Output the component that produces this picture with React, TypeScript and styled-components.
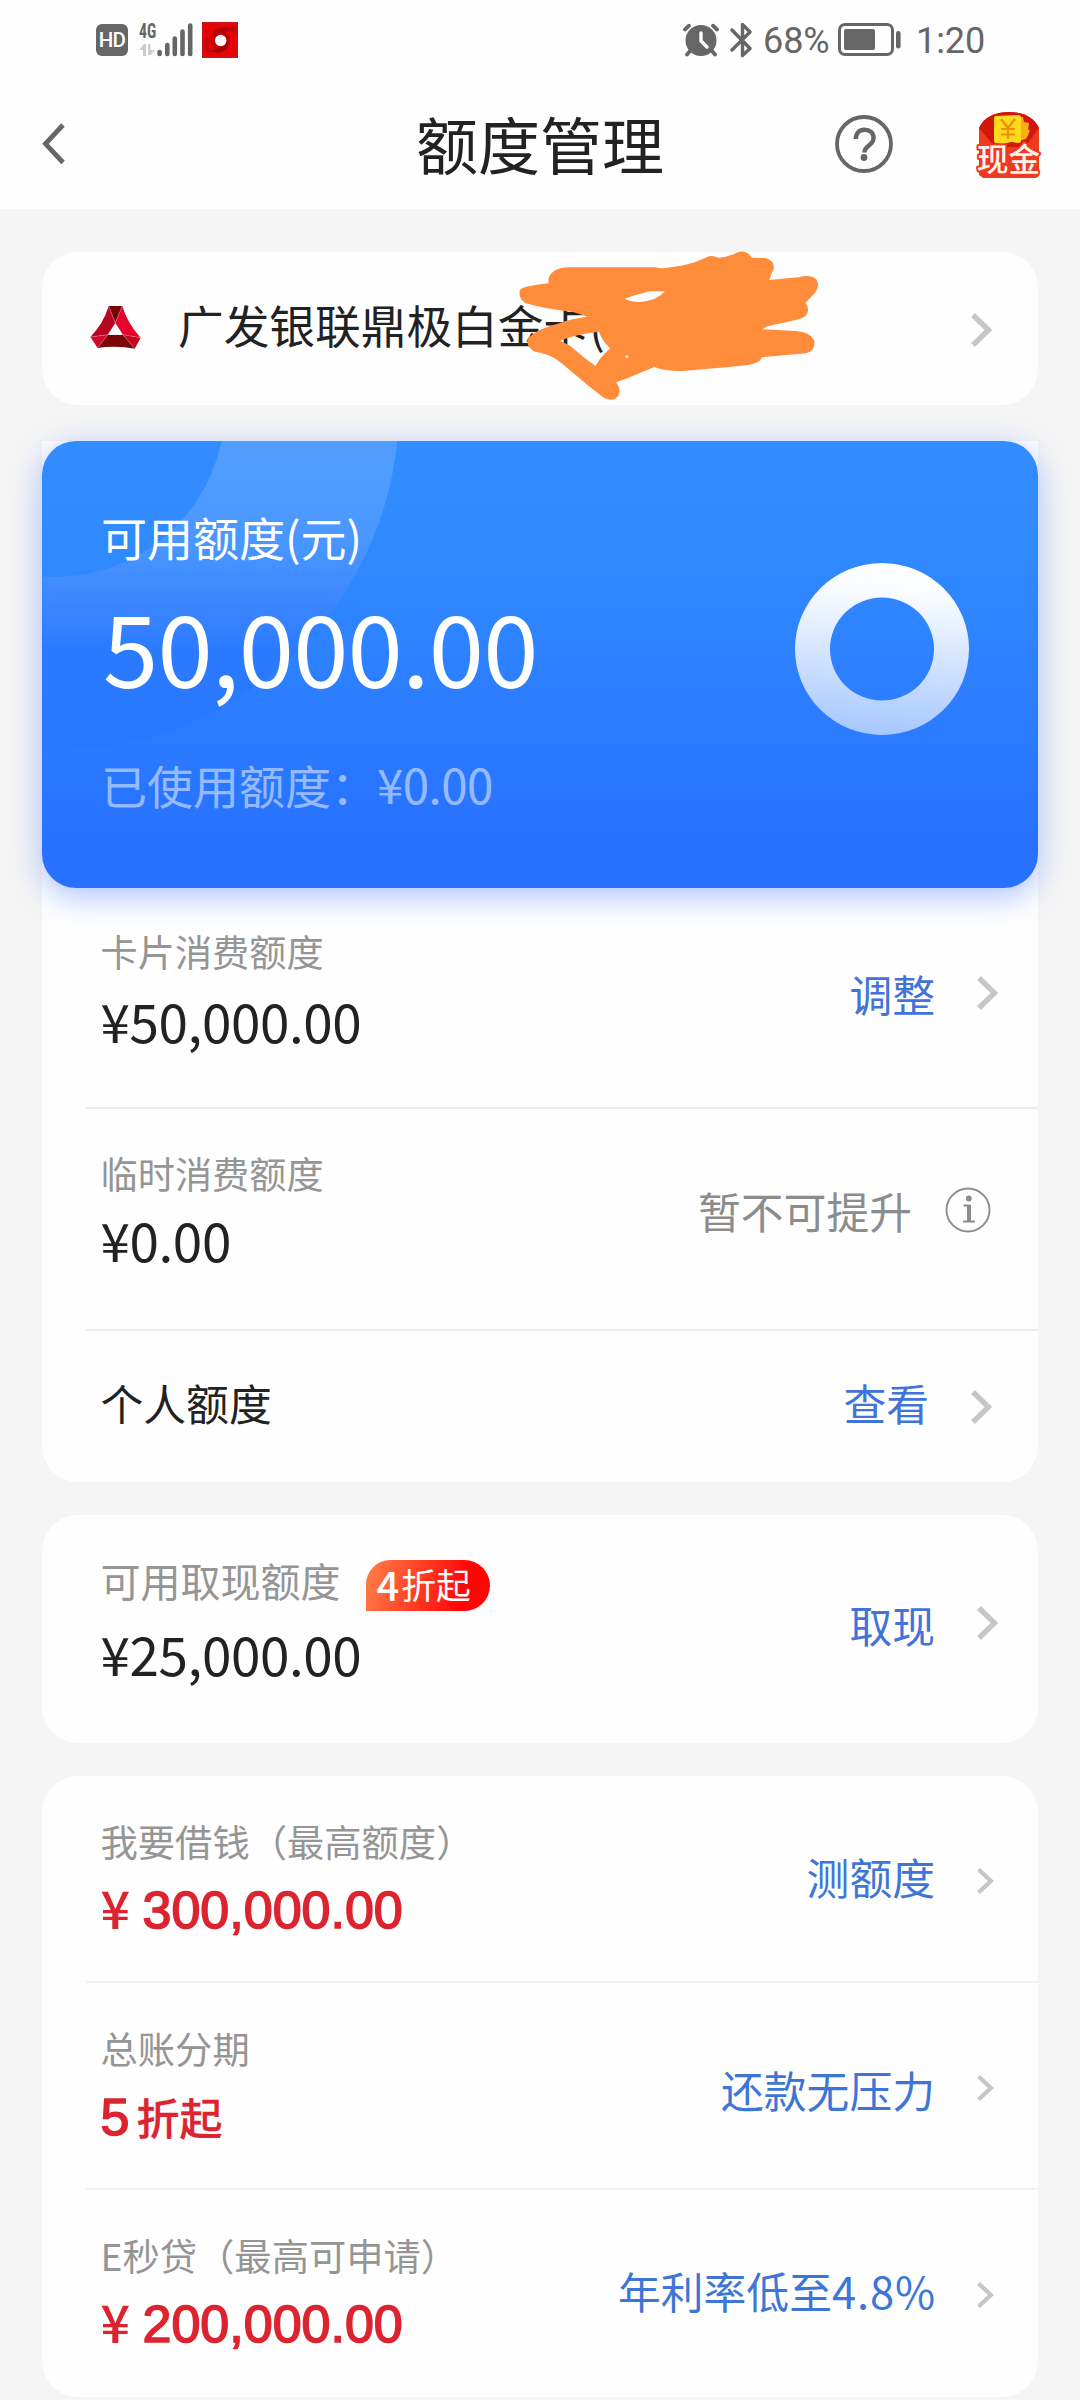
import React from 'react';
import styled, { createGlobalStyle } from 'styled-components';

const GlobalStyle = createGlobalStyle`
  * { box-sizing: border-box; }
  body {
    margin: 0;
    background: #f5f5f5;
    font-family: "Noto Sans CJK SC", sans-serif;
    color: #222;
  }
  svg { display: block; flex: none; }
`;

const Page = styled.div`
  width: 1080px;
  height: 2400px;
  overflow: hidden;
  background: #f5f5f5;
`;

/* ---------- status bar ---------- */

const StatusBar = styled.div`
  display: flex;
  align-items: center;
  justify-content: space-between;
  height: 79px;
  padding: 0 94px 0 96px;
  background: #fefefe;
`;

const StatusGroup = styled.div`
  display: flex;
  align-items: center;
`;

const HdBadge = styled.span`
  width: 32px;
  height: 32px;
  margin-right: 11px;
  border-radius: 6px;
  background: #666;
  color: #fff;
  font: 500 20.5px/33px Roboto, sans-serif;
  letter-spacing: -0.6px;
  text-align: center;
`;

const Network = styled.div`
  display: flex;
  flex-direction: column;
  width: 18px;
  height: 36px;
  gap: 5px;
`;

const NetworkLabel = styled.span`
  height: 17px;
  color: #666;
  font: 700 20.5px/18px "Roboto Condensed", Roboto, sans-serif;
  transform: scaleX(0.77);
  transform-origin: left;
`;

const StatusText = styled.span<{ $width: number; $left: number }>`
  width: ${p => p.$width}px;
  margin-left: ${p => p.$left}px;
  color: #666;
  font: 400 36px/40px Roboto, sans-serif;
  letter-spacing: -0.1px;
  white-space: nowrap;
  padding-top: 2px;
`;

/* ---------- navigation ---------- */

const NavBar = styled.div`
  display: grid;
  grid-template-columns: 1fr auto 1fr;
  align-items: center;
  height: 130px;
  padding: 0 38px 0 38px;
  background: #fefefe;
`;

const Title = styled.h1`
  margin: 0 0 3px;
  font-size: 62px;
  line-height: 80px;
  font-weight: 400;
`;

const NavActions = styled.div`
  display: flex;
  align-items: center;
  justify-content: flex-end;
  gap: 81px;
`;

/* ---------- cards ---------- */

const Content = styled.main`
  display: flex;
  flex-direction: column;
  padding: 43px 42px 0;
`;

const Card = styled.section<{ $gap?: number; $height: number }>`
  position: relative;
  height: ${p => p.$height}px;
  margin-bottom: ${p => p.$gap ?? 0}px;
  border-radius: 36px;
  background: #fefefe;
`;

const BankCard = styled(Card)`
  display: flex;
  align-items: center;
  padding: 0 46px 3px 48px;
`;

const BankName = styled.span`
  flex: 1;
  margin-left: 37px;
  padding-bottom: 6px;
  font-size: 45.7px;
  line-height: 60px;
  white-space: nowrap;
`;

const Scribble = styled.svg`
  position: absolute;
  left: 458px;
  top: -22px;
`;

const LimitCard = styled(Card)`
  border-radius: 0 0 36px 36px;
`;

const Hero = styled.div`
  position: relative;
  display: flex;
  justify-content: space-between;
  height: 447px;
  padding: 67px 69px 0 59px;
  border-radius: 34px;
  background: linear-gradient(#348dff 0%, #308aff 24%, #2c7dff 60%, #2871ff 90%, #2871ff 100%);
  box-shadow: 0 8px 32px rgba(50, 105, 255, 0.4);
  color: #fff;
`;

const HeroArc = styled.svg`
  position: absolute;
  left: 0;
  top: 0;
  border-radius: 34px;
`;

const HeroText = styled.div`
  position: relative;
  display: flex;
  flex-direction: column;
  white-space: nowrap;
`;

const HeroLabel = styled.div`
  font-size: 46px;
  line-height: 56px;
`;

const HeroAmount = styled.div`
  margin: 21px 0 0 2px;
  font-size: 99.500px;
  line-height: 120px;
  letter-spacing: -0.8px;
`;

const HeroUsed = styled.div`
  margin-top: 49px;
  font-size: 46px;
  line-height: 60px;
  color: rgba(255, 255, 255, 0.52);
`;

const HeroUsedValue = styled.span`
  font-size: 47.500px;
  letter-spacing: -0.6px;
`;

const Ring = styled.svg`
  margin-top: 55px;
`;

const Row = styled.div<{ $height: number; $line?: string }>`
  display: flex;
  justify-content: space-between;
  height: ${p => p.$height}px;
  margin-left: 44px;
  padding-left: 14.500px;
  border-bottom: ${p => (p.$line ? `2px solid ${p.$line}` : 'none')};
  white-space: nowrap;
`;

const Info = styled.div<{ $top: number }>`
  padding-top: ${p => p.$top}px;
`;

const Label = styled.div<{ $size?: number }>`
  display: flex;
  font-size: ${p => p.$size ?? 37.2}px;
  line-height: 40px;
  color: #959595;
`;

const Amount = styled.div<{ $gap: number }>`
  margin-top: ${p => p.$gap}px;
  font-size: 53px;
  line-height: 60px;
  letter-spacing: -0.4px;
`;

const Offer = styled.div<{ $gap: number }>`
  display: flex;
  margin-top: ${p => p.$gap}px;
  color: #dc2430;
  font: 400 52px/60px "Liberation Sans", sans-serif;
  -webkit-text-stroke: 1.6px #dc2430;
`;

const Yen = styled.span`
  width: 42px;
  font: 500 52px/54px "Noto Sans CJK SC", sans-serif;
  -webkit-text-stroke: 0;
`;

const OfferWord = styled.span`
  margin-left: 7px;
  font: 500 43px/58px "Noto Sans CJK SC", sans-serif;
  -webkit-text-stroke: 0.3px #dc2430;
`;

const PlainTitle = styled.div`
  font-size: 42.8px;
  line-height: 60px;
`;

const Badge = styled.span`
  display: flex;
  align-items: center;
  width: 124px;
  height: 51px;
  margin: 0 0 -11px 25px;
  padding: 0 0 4px 11px;
  border-radius: 25px 26px 26px 0;
  background: linear-gradient(105deg, #ff7443 8%, #ff0505 78%);
  color: #fff;
  font-size: 34.8px;
  line-height: 46px;
`;

const BadgeNumber = styled.span`
  margin-right: 2px;
  font-size: 40px;
  font-weight: 500;
`;

const Side = styled.div<{ $top: number; $right: number; $gap?: number; $tone?: string }>`
  display: flex;
  align-items: center;
  gap: ${p => p.$gap ?? 42}px;
  height: 44px;
  margin-top: ${p => p.$top}px;
  margin-right: ${p => p.$right}px;
  color: ${p => p.$tone ?? '#4273d8'};
  font-size: 42.8px;
  line-height: 44px;
`;

const Rate = styled.span`
  font-size: 43.500px;
  letter-spacing: 0.9px;
`;

const ChevronIcon = styled.svg<{ $shift: number }>`
  position: relative;
  top: ${p => p.$shift}px;
`;

const Chevron = ({ small = false, shift = 0 }: { small?: boolean; shift?: number }) =>
  small ? (
    <ChevronIcon $shift={shift} width="17" height="26" viewBox="0 0 17 26">
      <path d="M1.5 1.5 14 13 1.5 24.5" fill="none" stroke="#c6c6c8" strokeWidth="4.2" />
    </ChevronIcon>
  ) : (
    <ChevronIcon $shift={shift} width="21" height="34" viewBox="0 0 21 34">
      <path d="M2 2 17.5 17 2 32" fill="none" stroke="#c6c6c8" strokeWidth="5.4" />
    </ChevronIcon>
  );

const SignalIcon = () => (
  <svg width="36" height="36" viewBox="0 0 36 36">
    <g stroke="#666" strokeWidth="4.6" strokeLinecap="round">
      <path d="M2.6 30v2M10.3 23v9M17.8 16.500v15.500M25.500 9.500V32M33.200 3.500V32" />
    </g>
  </svg>
);

const DataArrows = () => (
  <svg width="16" height="12" viewBox="0 0 16 12">
    <path d="M0 6 5 0h2v12H4V6zM9 0h2.500v6H16l-4.500 5H9z" fill="#ccc" />
  </svg>
);

const RecorderSvg = styled.svg`
  margin-left: 9px;
`;

const RecorderIcon = () => (
  <RecorderSvg width="36" height="36" viewBox="0 0 36 36">
    <rect width="36" height="36" fill="#e60505" />
    <path d="M18 9c8-7 13-5 18-2v6c-5-5-11-5-15-1z" fill="#9c0508" opacity=".5" />
    <path d="M9 14c3-9 13-11 20-6-7-1-12 3-13 6z" fill="#a40406" opacity=".6" />
    <path d="M27 20c-1 10-12 14-20 8 7 1 12-2 14-7z" fill="#8e0406" opacity=".7" />
    <path d="M10 16c-5 5-4 13 1 17-7-2-10-6-11-11 1-5 5-8 10-8z" fill="#b00507" opacity=".5" />
    <circle cx="18.700" cy="18.500" r="10" fill="#a00508" opacity=".45" />
    <circle cx="18.700" cy="18.500" r="5.700" fill="#fff" />
    <rect x=".7" y=".7" width="34.600" height="34.600" fill="none" stroke="#c4161a" strokeWidth="1.400" />
  </RecorderSvg>
);

const AlarmIcon = () => (
  <svg width="36" height="34" viewBox="0 0 36 34">
    <circle cx="18" cy="17.500" r="15.500" fill="#666" />
    <g fill="none" stroke="#666" strokeWidth="3.800" strokeLinecap="round">
      <path d="M2 6.500 6 2.700M34 6.500 30 2.700M7 28l-3 3.500M29 28l3 3.500" />
    </g>
    <path d="M18 10v8l6 6" fill="none" stroke="#fff" strokeWidth="3.400" strokeLinecap="round" />
  </svg>
);

const BluetoothSvg = styled.svg`
  margin-left: 11px;
`;

const BluetoothIcon = () => (
  <BluetoothSvg width="23" height="36" viewBox="0 0 23 36">
    <path
      d="M2 8 20 26.500 12.500 33.500V2.500L20 10 2 28"
      fill="none"
      stroke="#666"
      strokeWidth="3.400"
      strokeLinecap="round"
      strokeLinejoin="round"
    />
  </BluetoothSvg>
);

const BatteryIcon = () => (
  <svg width="63" height="33" viewBox="0 0 63 33">
    <rect x="1.500" y="1.500" width="53" height="30" rx="5.500" fill="none" stroke="#666" strokeWidth="3" />
    <rect x="6" y="6" width="31" height="21" rx="2" fill="#666" />
    <rect x="58" y="8" width="4.600" height="17.500" rx="2.200" fill="#666" />
  </svg>
);

const BackIcon = () => (
  <svg width="28" height="44" viewBox="0 0 28 44">
    <path d="M25 3 7.500 21.800 25 40.500" fill="none" stroke="#666" strokeWidth="4.800" />
  </svg>
);

const HelpIcon = () => (
  <svg width="60" height="60" viewBox="0 0 60 60">
    <circle cx="30" cy="30" r="27" fill="none" stroke="#666" strokeWidth="3.800" />
    <path
      d="M21.800 25c0-5.500 3.300-9.300 8.700-9.300 5.300 0 9.100 3.300 9.100 8.400 0 7.500-9.200 7.400-9.200 14.400"
      fill="none"
      stroke="#666"
      strokeWidth="4.400"
    />
    <circle cx="30" cy="43.500" r="3.400" fill="#666" />
  </svg>
);

const EnvelopeIcon = () => (
  <svg width="67" height="71" viewBox="0 0 67 71">
    <path d="M4 19C9 8 20 3 34 3s25 5 30 16v48l-3 2H8l-4-3z" fill="#ee3a1f" />
    <path d="M4 19C9 8 20 3 34 3s25 5 30 16L50 38H20z" fill="#d0170c" />
    <path d="M43 8h5l1 5 5 1-1 6 2 2-4 8-8 2z" fill="#ffae12" />
    <path d="M19 9q0-2 2-2l22-1q3 0 3 2v24q0 2-2 2l-8-1-8 2-7-1q-2 0-2-2z" fill="#ffd91e" />
    <path d="M26 10l7 9 7-9M33 19v11M26 20h14M26 25.500h14" fill="none" stroke="#f08c0c" strokeWidth="2.200" />
    <text
      x="33.500"
      y="62"
      textAnchor="middle"
      fontFamily="Noto Sans CJK SC, sans-serif"
      fontWeight="500"
      fontSize="31.500"
      fill="#fff3ec"
      stroke="#ee3a1f"
      strokeWidth="4"
      strokeLinejoin="round"
      paintOrder="stroke"
    >
      现金
    </text>
  </svg>
);

const BankLogo = () => (
  <svg width="51" height="44" viewBox="262 229 147 132" preserveAspectRatio="none">
    <path d="M316 232Q300 286 263 325L313 318 335 283z" fill="#b9061f" />
    <path d="M355 232Q369 283 408 327L357 318 335 283z" fill="#e5032c" />
    <path d="M316 232H355L335 283z" fill="#780308" />
    <path d="M313 318H357L392 360Q338 350 283 358z" fill="#7c0508" />
    <path d="M263 325 313 318 284 358z" fill="#d2082a" />
    <path d="M408 327 357 318 391 360z" fill="#c4061f" />
    <path d="M316 232 335 283 355 232M263 325 313 318 284 358M408 327 357 318 391 360" fill="none" stroke="#f4b8bd" strokeWidth="1" />
    <path d="M335 285 317 318H354z" fill="#fff" />
  </svg>
);

const InfoIcon = () => (
  <svg width="46" height="46" viewBox="0 0 46 46">
    <circle cx="23" cy="23" r="21.500" fill="none" stroke="#8c8c8c" strokeWidth="1.900" />
    <circle cx="23.800" cy="11.500" r="2.900" fill="#8c8c8c" />
    <path d="M18.500 18.500h5.800v16M18 34.600h12" fill="none" stroke="#8c8c8c" strokeWidth="2" />
    <path d="M24 18v16" stroke="#8c8c8c" strokeWidth="4" />
  </svg>
);

const DIVIDER = '#ececed';
const DIVIDER_SOFT = '#f2f2f3';

export default function App() {
  return (
    <Page>
      <GlobalStyle />
      <StatusBar>
        <StatusGroup>
          <HdBadge>HD</HdBadge>
          <Network>
            <NetworkLabel>4G</NetworkLabel>
            <DataArrows />
          </Network>
          <SignalIcon />
          <RecorderIcon />
        </StatusGroup>
        <StatusGroup>
          <AlarmIcon />
          <BluetoothIcon />
          <StatusText $width={75} $left={10}>68%</StatusText>
          <BatteryIcon />
          <StatusText $width={70} $left={15}>1:20</StatusText>
        </StatusGroup>
      </StatusBar>
      <NavBar>
        <BackIcon />
        <Title>额度管理</Title>
        <NavActions>
          <HelpIcon />
          <EnvelopeIcon />
        </NavActions>
      </NavBar>

      <Content>
        <BankCard $height={153} $gap={36}>
          <BankLogo />
          <BankName>广发银联鼎极白金卡(</BankName>
          <Chevron shift={3} />
          <Scribble width="580" height="200" viewBox="0 0 1568 600" preserveAspectRatio="none">
            <path
              fill="#ff8c3a"
              fillRule="evenodd"
              d="M131 160C128 130 150 113 185 112L420 112Q440 118 460 112C510 106 535 95 558 82Q572 74 590 83Q615 82 640 68Q666 56 680 83L715 84C740 88 746 112 735 128L728 150Q770 146 808 142Q838 132 855 148Q866 165 852 188L826 218Q840 240 826 258C810 272 750 280 720 290L710 298L800 303Q838 306 849 330Q855 362 826 370L708 382Q704 400 670 405C620 410 560 418 492 423Q436 422 418 410Q360 438 314 457Q330 482 318 500Q304 516 282 504C240 470 190 420 155 390Q130 370 95 365Q66 348 78 322Q100 298 160 280Q190 266 236 260L200 247C150 240 100 230 70 220Q48 205 54 180Q62 168 131 160ZM337 206Q380 190 405 184L446 184Q425 212 378 216Q350 214 337 206ZM163 332Q205 312 268 305Q274 330 298 355Q272 380 258 408Q225 382 190 348Z"
            />
            <circle cx="343" cy="380" r="5" fill="#ffe2cc" />
          </Scribble>
        </BankCard>

        <LimitCard $height={1041} $gap={33}>
          <Hero>
            <HeroArc width="500" height="447" viewBox="0 0 500 447">
              <defs>
                <linearGradient id="arc" gradientUnits="userSpaceOnUse" x1="0" y1="0" x2="0" y2="310">
                  <stop offset="0" stopColor="#fff" stopOpacity=".15" />
                  <stop offset=".3" stopColor="#f0f0ff" stopOpacity=".13" />
                  <stop offset=".5" stopColor="#9090ff" stopOpacity=".16" />
                  <stop offset=".68" stopColor="#1c5cff" stopOpacity=".2" />
                  <stop offset="1" stopColor="#2060ff" stopOpacity=".1" />
                </linearGradient>
              </defs>
              <path
                fillRule="evenodd"
                fill="url(#arc)"
                d="M-331-34a344 344 0 1 0 688 0a344 344 0 1 0-688 0zM-157-34a170 170 0 1 0 340 0a170 170 0 1 0-340 0z"
              />
            </HeroArc>
            <HeroText>
              <HeroLabel>可用额度(元)</HeroLabel>
              <HeroAmount>50,000.00</HeroAmount>
              <HeroUsed>
                已使用额度：<HeroUsedValue>¥0.00</HeroUsedValue>
              </HeroUsed>
            </HeroText>
            <Ring width="174" height="172" viewBox="0 0 174 172" preserveAspectRatio="none">
              <defs>
                <linearGradient id="ring" x1="0.070" y1="0" x2="0" y2="1">
                  <stop offset="0" stopColor="#fff" />
                  <stop offset=".15" stopColor="#f8fbff" />
                  <stop offset="1" stopColor="#a3c5ff" />
                </linearGradient>
              </defs>
              <path
                fill="url(#ring)"
                fillRule="evenodd"
                d="M0 86a87 86 0 1 0 174 0a87 86 0 1 0-174 0zM35 86a52 51.500 0 1 0 104 0a52 51.500 0 1 0-104 0z"
              />
            </Ring>
          </Hero>
          <Row $height={221} $line={DIVIDER}>
            <Info $top={43}>
              <Label>卡片消费额度</Label>
              <Amount $gap={19}>¥50,000.00</Amount>
            </Info>
            <Side $top={83} $right={40}>
              调整
              <Chevron />
            </Side>
          </Row>
          <Row $height={222} $line={DIVIDER}>
            <Info $top={44}>
              <Label>临时消费额度</Label>
              <Amount $gap={16}>¥0.00</Amount>
            </Info>
            <Side $top={79} $right={47} $gap={33} $tone="#8c8c8c">
              暂不可提升
              <InfoIcon />
            </Side>
          </Row>
          <Row $height={151}>
            <Info $top={41}>
              <PlainTitle>个人额度</PlainTitle>
            </Info>
            <Side $top={49} $right={46}>
              查看
              <Chevron shift={5} />
            </Side>
          </Row>
        </LimitCard>

        <Card $height={228} $gap={33}>
          <Row $height={228}>
            <Info $top={45}>
              <Label $size={40}>
                可用取现额度
                <Badge>
                  <BadgeNumber>4</BadgeNumber>折起
                </Badge>
              </Label>
              <Amount $gap={23}>¥25,000.00</Amount>
            </Info>
            <Side $top={87} $right={40}>
              取现
              <Chevron shift={-1} />
            </Side>
          </Row>
        </Card>

        <Card $height={621}>
          <Row $height={207} $line={DIVIDER_SOFT}>
            <Info $top={45}>
              <Label $size={37.3}>我要借钱（最高额度）</Label>
              <Offer $gap={19}>
                <Yen>¥</Yen>300,000.00
              </Offer>
            </Info>
            <Side $top={78} $right={44} $tone="#3d76d6">
              测额度
              <Chevron small shift={5} />
            </Side>
          </Row>
          <Row $height={207} $line={DIVIDER_SOFT}>
            <Info $top={45}>
              <Label $size={37.3}>总账分期</Label>
              <Offer $gap={19}>
                5<OfferWord>折起</OfferWord>
              </Offer>
            </Info>
            <Side $top={84} $right={44} $tone="#3d76d6">
              还款无压力
              <Chevron small shift={-1} />
            </Side>
          </Row>
          <Row $height={207}>
            <Info $top={45}>
              <Label $size={37.3}>E秒贷（最高可申请）</Label>
              <Offer $gap={19}>
                <Yen>¥</Yen>200,000.00
              </Offer>
            </Info>
            <Side $top={78} $right={44} $gap={41} $tone="#3d76d6">
              <span>
                年利率低至<Rate>4.8%</Rate>
              </span>
              <Chevron small shift={5} />
            </Side>
          </Row>
        </Card>
      </Content>
    </Page>
  );
}
